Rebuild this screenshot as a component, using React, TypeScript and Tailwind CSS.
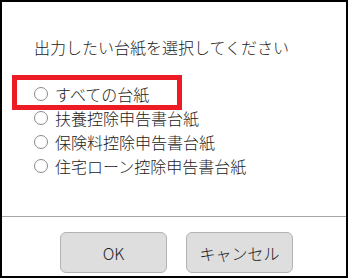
import React from 'react';

const options = ['すべての台紙', '扶養控除申告書台紙', '保険料控除申告書台紙', '住宅ローン控除申告書台紙'];

const RadioRow: React.FC<{ label: string }> = ({ label }) => (
  <label className="flex items-center h-[24px]">
    <span className="w-[14px] h-[14px] rounded-full border border-[#8a8a8a] bg-white shrink-0" />
    <span className="ml-[7px]">{label}</span>
  </label>
);

const App: React.FC = () => {
  return (
    <div
      className="relative w-[348px] h-[278px] border-2 border-black bg-white text-[#222] text-[16px] leading-[24px] font-light"
      style={{ fontFamily: '"Noto Sans CJK JP", "Noto Sans", sans-serif' }}
    >
      <div className="h-[214px] pl-[32px] pt-[33px]">
        <p>出力したい台紙を選択してください</p>
        <div className="mt-[23px] flex flex-col">
          {options.map((o) => (
            <RadioRow key={o} label={o} />
          ))}
        </div>
      </div>
      <div className="border-t border-[#a6a6a6] pt-[15px] pl-[58px] flex gap-[19px]">
        <button className="w-[107px] h-[41px] rounded-[6px] border border-[#b3b3b3] bg-[#dedede] text-[#222]">
          OK
        </button>
        <button className="w-[107px] h-[41px] rounded-[6px] border border-[#b3b3b3] bg-[#dedede] text-[#222]">
          キャンセル
        </button>
      </div>
      {/* highlight annotation */}
      <div className="absolute left-[10px] top-[73px] w-[170px] h-[35px] border-[5px] border-[#ed1c24]" />
    </div>
  );
};

export default App;
